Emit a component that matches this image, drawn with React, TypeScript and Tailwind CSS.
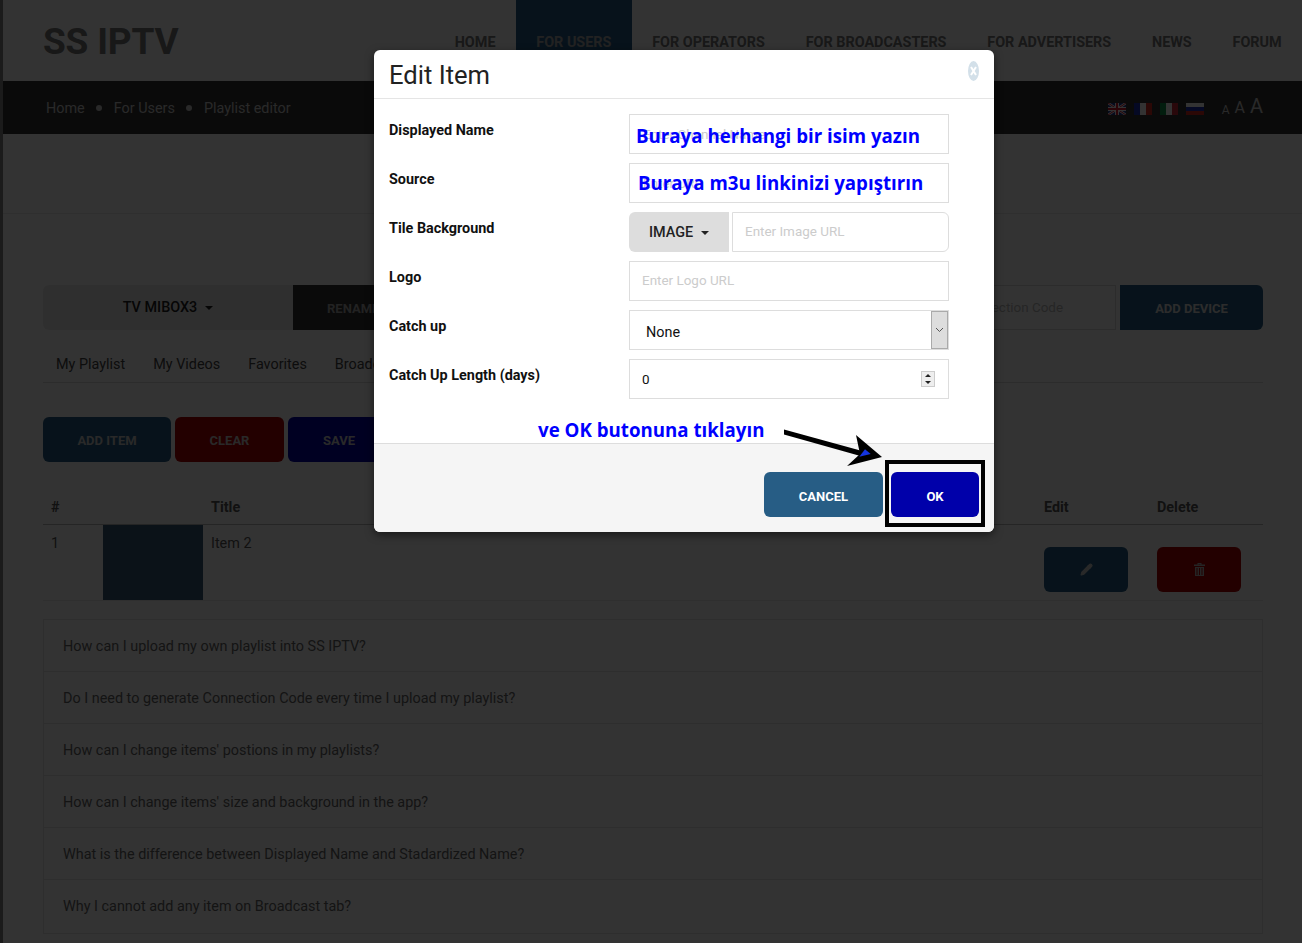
import { Pencil } from 'lucide-react';

const navItems = [
  { label: 'Home' },
  { label: 'For Users', active: true },
  { label: 'For Operators' },
  { label: 'For Broadcasters' },
  { label: 'For Advertisers' },
  { label: 'News' },
  { label: 'Forum' },
];

const tabs = ['My Playlist', 'My Videos', 'Favorites', 'Broadcast'];

const faqs = [
  'How can I upload my own playlist into SS IPTV?',
  'Do I need to generate Connection Code every time I upload my playlist?',
  "How can I change items' postions in my playlists?",
  "How can I change items' size and background in the app?",
  'What is the difference between Displayed Name and Stadardized Name?',
  'Why I cannot add any item on Broadcast tab?',
];

const FlagUk = () => (
  <svg width="18" height="12" viewBox="0 0 18 12">
    <rect width="18" height="12" fill="#1f3a93" />
    <path d="M0 0L18 12M18 0L0 12" stroke="#fff" strokeWidth="2.4" />
    <path d="M0 0L18 12M18 0L0 12" stroke="#cf142b" strokeWidth="1" />
    <path d="M9 0V12M0 6H18" stroke="#fff" strokeWidth="4" />
    <path d="M9 0V12M0 6H18" stroke="#cf142b" strokeWidth="2" />
  </svg>
);

const FlagBars = ({ a, b, c }: { a: string; b: string; c: string }) => (
  <svg width="18" height="12" viewBox="0 0 18 12">
    <rect width="6" height="12" fill={a} />
    <rect x="6" width="6" height="12" fill={b} />
    <rect x="12" width="6" height="12" fill={c} />
  </svg>
);

const FlagRu = () => (
  <svg width="18" height="12" viewBox="0 0 18 12">
    <rect width="18" height="4" fill="#fff" />
    <rect y="4" width="18" height="4" fill="#1c2fb5" />
    <rect y="8" width="18" height="4" fill="#d52b1e" />
  </svg>
);

const TrashGlyph = () => (
  <svg width="11" height="13" viewBox="0 0 11 13" fill="currentColor">
    <path d="M3.500 0H7.500V1.500H11V3H0V1.500H3.500ZM4.500 1V1.500H6.500V1Z" fillRule="evenodd" />
    <path d="M1 4H10V13H1ZM2.500 5V12H3.500V5ZM5 5V12H6V5ZM7.500 5V12H8.500V5Z" fillRule="evenodd" />
  </svg>
);

const Caret = ({ className }: { className: string }) => (
  <span className={`inline-block w-0 h-0 border-x-[4px] border-x-transparent border-t-[4px] ${className}`} />
);

const Header = () => (
  <header className="h-[81px] bg-white flex justify-between pl-[40px]">
    <div className="text-[37px] leading-none font-bold text-[#777] pt-[23px] tracking-[-0.2px]">SS IPTV</div>
    <nav className="flex">
      {navItems.map((item) => (
        <a
          key={item.label}
          className={`px-[20.4px] pt-[35px] text-[14.4px] leading-4 font-bold uppercase text-[#777] ${item.active ? 'bg-[#275d85] text-[#aaa]' : ''}`}
        >
          {item.label}
        </a>
      ))}
    </nav>
  </header>
);

const Breadcrumb = () => (
  <div className="h-[53px] bg-[#333] flex items-center justify-between pl-[43px] pr-[39px] text-[14.4px] text-[#ccc]">
    <div className="flex items-center pt-[2px]">
      <span>Home</span>
      <span className="w-[6px] h-[6px] rounded-full bg-[#ccc] mx-[11.5px]" />
      <span>For Users</span>
      <span className="w-[6px] h-[6px] rounded-full bg-[#ccc] mx-[11.5px]" />
      <span>Playlist editor</span>
    </div>
    <div className="flex items-center">
      <div className="flex gap-2 mr-[18px] mt-[3px]">
        <FlagUk />
        <FlagBars a="#1c2fb5" b="#fff" c="#d52b1e" />
        <FlagBars a="#0a8f46" b="#fff" c="#cd2b37" />
        <FlagRu />
      </div>
      <div className="flex items-end gap-[5px] leading-none text-[#ccc] pb-[3px]">
        <span className="text-[12px]">A</span>
        <span className="text-[16px]">A</span>
        <span className="text-[20px]">A</span>
      </div>
    </div>
  </div>
);

const DeviceRow = () => (
  <div className="mt-[71px] h-[45px] flex text-[14.4px]">
    <div className="w-[250px] bg-[#ececec] rounded-l-md flex items-center justify-center gap-2 font-medium text-[#222]">
      TV MIBOX3 <Caret className="border-t-[#222]" />
    </div>
    <button className="w-[112px] bg-[#333] text-[#aaa] font-bold text-left pl-[34px] pt-[2px] text-[13px]">RENAME</button>
    <div className="flex-1" />
    <input
      placeholder="Enter Connection Code"
      className="w-[207px] h-[45px] border border-[#ddd] pl-[16px] pr-[8px] text-[13.44px] placeholder:text-[#bbb]"
    />
    <button className="ml-[4px] w-[143px] bg-[#275d85] text-[#ddd] font-bold text-[13px] pt-[2px] rounded-r-md">ADD DEVICE</button>
  </div>
);

const Tabs = () => (
  <div className="mt-[18px] h-[35px] border-b border-[#ddd] flex pl-[13px] gap-[28px] text-[14.4px] text-[#444] items-center">
    {tabs.map((tab) => (
      <span key={tab}>{tab}</span>
    ))}
  </div>
);

const Actions = () => (
  <div className="mt-[34px] flex gap-[4px] text-[13px] font-bold text-[#ccc]">
    <button className="w-[128px] h-[45px] pt-[2px] rounded-md bg-[#275d85]">ADD ITEM</button>
    <button className="w-[109px] h-[45px] pt-[2px] rounded-md bg-[#b00000]">CLEAR</button>
    <button className="w-[102px] h-[45px] pt-[2px] rounded-md bg-[#0000aa]">SAVE</button>
  </div>
);

const PlaylistTable = () => (
  <div className="mt-[28px] text-[14.4px] text-[#555]">
    <div className="h-[35px] pt-[2px] border-b border-[#bbb] flex items-center font-bold text-[#555]">
      <span className="w-[168px] pl-[8px]">#</span>
      <span className="flex-1">Title</span>
      <span className="w-[113px]">Edit</span>
      <span className="w-[106px]">Delete</span>
    </div>
    <div className="h-[76px] border-b border-[#e8e8e8] flex">
      <span className="w-[60px] pl-[8px] pt-[8px]">1</span>
      <div className="w-[100px] h-[75px] bg-[#3a5d78]" />
      <span className="flex-1 pl-[8px] pt-[8px]">Item 2</span>
      <div className="w-[113px] pt-[22px]">
        <button className="w-[84px] h-[45px] rounded-md bg-[#275d85] flex items-center justify-center text-[#ccc]">
          <Pencil size={13} fill="currentColor" />
        </button>
      </div>
      <div className="w-[106px] pt-[22px]">
        <button className="w-[84px] h-[45px] rounded-md bg-[#b00000] flex items-center justify-center text-[#bbb]">
          <TrashGlyph />
        </button>
      </div>
    </div>
  </div>
);

const Faq = () => (
  <div className="mt-[18px] border border-[#e4e4e4] text-[14.4px] text-[#666]">
    {faqs.map((q, i) => (
      <div
        key={q}
        className={`flex items-center pl-[19px] pt-[2px] ${i < faqs.length - 1 ? 'h-[52px] border-b border-[#e4e4e4]' : 'h-[53px] pb-[2px]'}`}
      >
        {q}
      </div>
    ))}
  </div>
);

const fieldClass = 'w-[320px] h-[40px] border border-[#ddd] text-[13.44px] bg-white';

const FormRow = ({ label, children }: { label: string; children: React.ReactNode }) => (
  <div className="flex h-[40px]">
    <label className="w-[240px] text-[14.4px] font-bold text-[#111] pt-[8px] leading-[18px]">{label}</label>
    {children}
  </div>
);

const noteClass = "absolute text-[18.7px] leading-7 font-bold text-[#0000ff] font-['Open_Sans'] whitespace-nowrap";

const EditModal = () => (
  <div className="absolute left-[374px] top-[50px] w-[620px] h-[482px] bg-white rounded-md shadow-[0_3px_9px_rgba(0,0,0,0.5)] flex flex-col">
    <div className="h-[49px] border-b border-[#e5e5e5] flex items-center justify-between pl-[15px] pr-[15px]">
      <h4 className="text-[25.6px] font-normal leading-none text-[#222] pt-[4px]">Edit Item</h4>
      <svg width="11" height="20" viewBox="0 0 11 20" className="-mt-[6px]">
        <ellipse cx="5.5" cy="10" rx="5.5" ry="10" fill="#d3e0e9" />
        <path d="M3 6L8 14M8 6L3 14" stroke="#fff" strokeWidth="2" />
      </svg>
    </div>

    <div className="flex-1 flex flex-col gap-[9px] pl-[15px] pt-[15px]">
      <FormRow label="Displayed Name">
        <input placeholder="Enter Channel Name" className={`${fieldClass} px-[13px] placeholder:text-[#ccc]`} />
      </FormRow>
      <FormRow label="Source">
        <input placeholder="Enter URL" className={`${fieldClass} px-[13px] placeholder:text-[#ccc]`} />
      </FormRow>
      <FormRow label="Tile Background">
        <div className="w-[320px] flex gap-[3px]">
          <button className="w-[100px] h-[40px] pt-[1px] bg-[#ddd] rounded-l-md text-[14.4px] font-medium text-[#222] flex items-center justify-center gap-[8px]">
            IMAGE <Caret className="border-t-[#222]" />
          </button>
          <input
            placeholder="Enter Image URL"
            className="w-[217px] h-[40px] border border-[#ddd] rounded-r-md px-[12px] pb-[1px] text-[13.44px] placeholder:text-[#ccc]"
          />
        </div>
      </FormRow>
      <FormRow label="Logo">
        <input placeholder="Enter Logo URL" className={`${fieldClass} px-[12px] pb-[1px] placeholder:text-[#ccc]`} />
      </FormRow>
      <FormRow label="Catch up">
        <div className={`${fieldClass} flex items-center justify-between pl-[16px] text-[#111]`}>
          <span className="text-[14.4px] pt-[5px]">None</span>
          <span className="w-[17px] h-[38px] bg-[#ddd] border border-[#aaa] flex items-center justify-center">
            <svg width="9" height="6" viewBox="0 0 9 6">
              <path d="M1 1L4.500 4.500L8 1" fill="none" stroke="#555" />
            </svg>
          </span>
        </div>
      </FormRow>
      <FormRow label="Catch Up Length (days)">
        <div className={`${fieldClass} flex items-center justify-between pl-[12px] pr-[13px] text-xs text-[#111]`}>
          <span className="pt-[1px]">0</span>
          <span className="w-[14px] h-[16px] bg-[#eee] border border-[#ccc] flex flex-col items-center justify-around">
            <span className="w-0 h-0 border-x-[3px] border-x-transparent border-b-[3px] border-b-[#222]" />
            <span className="w-0 h-0 border-x-[3px] border-x-transparent border-t-[3px] border-t-[#222]" />
          </span>
        </div>
      </FormRow>
    </div>

    <div className="h-[89px] bg-[#f5f5f5] border-t border-[#ddd] rounded-b-md flex justify-end gap-[8px] pt-[28px] pr-[15px]">
      <button className="w-[119px] h-[45px] pt-[5px] rounded-md bg-[#275d85] text-white text-[13px] font-bold">CANCEL</button>
      <button className="w-[88px] h-[45px] pt-[5px] rounded-md bg-[#0000aa] text-white text-[13px] font-bold">OK</button>
    </div>

    {/* notes drawn over the screenshot */}
    <span className={`${noteClass} left-[262px] top-[72px]`}>Buraya herhangi bir isim yazın</span>
    <span className={`${noteClass} left-[264px] top-[119px]`}>Buraya m3u linkinizi yapıştırın</span>
    <span className={`${noteClass} left-[164px] top-[366px]`}>ve OK butonuna tıklayın</span>
    <div className="absolute left-[511px] top-[410px] w-[100px] h-[67px] border-[4px] border-black" />
    <svg className="absolute left-[406px] top-[378px]" width="106" height="42" viewBox="0 0 106 42">
      <path d="M4 1.500L84 23.500L84 29L4 6.500Z" fill="#000" />
      <path d="M76 7L102 29L67 38L80 26Z" fill="#000" />
      <path d="M79.300 28.700L90.700 26L85 21.300Z" fill="#1434e0" />
    </svg>
  </div>
);

export default function App() {
  return (
    <div className="relative h-[943px] overflow-hidden bg-[#888] font-['Roboto',sans-serif]">
      <div className="ml-[3px] h-full bg-white">
        <Header />
        <Breadcrumb />
        <div className="h-[80px] border-b border-[#e8e8e8]" />
        <main className="pl-[40px] pr-[39px]">
          <DeviceRow />
          <Tabs />
          <Actions />
          <PlaylistTable />
          <Faq />
        </main>
      </div>
      <div className="absolute inset-0 bg-black/80" />
      <EditModal />
    </div>
  );
}
